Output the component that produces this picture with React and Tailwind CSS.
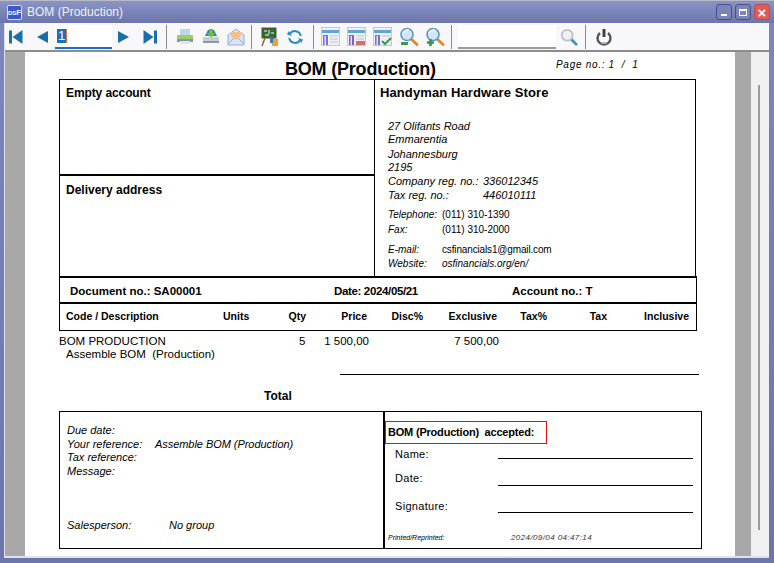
import React from "react";

const Sep = ({ ml = 0, mr = 0 }) => <div className="w-px h-[24px] bg-[#8a8a8a] shrink-0" style={{ marginLeft: ml, marginRight: mr }} />;

const Nav = ({ d, cx }) => (
  <svg width="16" height="16" viewBox="0 0 16 16" className="shrink-0" style={{ marginLeft: cx }}>
    <path d={d} fill="#1b6fa8" />
  </svg>
);

const Report = ({ color1 = "#7f6fd0", extra }) => (
  <svg width="20" height="20" viewBox="0 0 20 20" className="shrink-0">
    <rect x="0.5" y="0.5" width="18" height="18" fill="#eef0f4" stroke="#c4c8d0" />
    <rect x="1" y="3" width="17" height="3" fill="#5ea6d6" />
    <rect x="2" y="8" width="5" height="10" fill={color1} />
    <rect x="3.5" y="9" width="1.5" height="9" fill="#e9e4fa" />
    {extra}
  </svg>
);

const Magnifier = ({ sign }) => (
  <svg width="20" height="20" viewBox="0 0 20 20" className="shrink-0">
    <path d="M11.5 11.5l6.5 6" stroke="#e08a2e" strokeWidth="3" strokeLinecap="round" />
    <circle cx="8" cy="7.5" r="6" fill="#cfe6f7" stroke="#5b96c4" strokeWidth="1.6" />
    <path d="M4 6c1-2 3-3 6-3" stroke="#fff" strokeWidth="1.5" fill="none" />
    {sign === "minus" && <rect x="2" y="15" width="7" height="3" fill="#3c9a4e" />}
    {sign === "plus" && <path d="M5.5 12v7M2 15.5h7" stroke="#2f9a46" strokeWidth="2.6" />}
  </svg>
);

const Toolbar = () => (
  <div className="h-[27px] shrink-0 bg-[#f8f8fb] flex items-center border-b-2 border-[#8c8c8c] box-content">
    <Nav cx={3} d="M1 1.5h3v13H1zM14.5 1v14L4.5 8z" />
    <Nav cx={11} d="M13 2v12L2 8z" />
    <div className="ml-[4px] w-[57px] h-[24px] bg-white border-b-2 border-[#1a6fc4] shrink-0 flex items-center pl-[2px]">
      <span className="bg-[#1a6fc4] text-white text-[13px] leading-[14px] h-[14px] px-[1px]">1</span>
      <span className="w-px h-[14px] bg-[#d9782a]" />
    </div>
    <Nav cx={3} d="M3 2v12l11-6z" />
    <Nav cx={11} d="M1.500 1v14L11.500 8zM12 1.500h3v13h-3z" />
    <Sep ml={8} mr={9} />
    <svg width="18" height="18" viewBox="0 0 18 18" className="shrink-0">
      <rect x="4" y="1" width="10" height="6" fill="#bcd6ea" />
      <rect x="1" y="7" width="16" height="6" rx="1" fill="#9ccf5f" />
      <rect x="1" y="11" width="16" height="3" fill="#7d9aa8" />
      <rect x="4" y="13" width="10" height="3" fill="#dfe5ea" />
    </svg>
    <svg width="20" height="18" viewBox="0 0 20 18" className="shrink-0 ml-[7px]">
      <path d="M4 8L7 2h6l3 6z" fill="#2d7ea8" />
      <path d="M8 1h4v4h2.500L10 9.500 5.500 5H8z" fill="#6bbf3a" />
      <path d="M2 9h16v6H2z" fill="#c4ced4" />
      <path d="M2 13h16v2H2z" fill="#8b9aa2" />
    </svg>
    <svg width="18" height="18" viewBox="0 0 18 18" className="shrink-0 ml-[6px]">
      <path d="M1 7l8-6 8 6v10H1z" fill="#dbe3f5" stroke="#9aaad6" />
      <path d="M4 8V4h10v4l-5 4z" fill="#f2c188" />
      <path d="M1 16l6-6M17 16l-6-6" stroke="#9aaad6" />
    </svg>
    <Sep ml={6} mr={9} />
    <svg width="18" height="20" viewBox="0 0 18 20" className="shrink-0">
      <rect x="1" y="1" width="14" height="10" fill="#2c6b33" stroke="#6b4a26" />
      <path d="M3 4h3M8 3v4M10 6h3M4 8h4" stroke="#fff" />
      <path d="M4 11l-3 8M12 11l2 8" stroke="#8c5b2a" strokeWidth="1.400" />
      <rect x="11" y="12" width="6" height="7" fill="#e9a52d" />
      <rect x="9" y="10" width="3" height="6" fill="#4a74b8" />
    </svg>
    <svg width="16" height="16" viewBox="0 0 16 16" className="shrink-0 ml-[8px]" fill="none">
      <path d="M2.200 9A6 6 0 0 0 13.500 10.500" stroke="#2a8cc0" strokeWidth="2" />
      <path d="M13.800 7A6 6 0 0 0 2.500 5.500" stroke="#2a8cc0" strokeWidth="2" />
      <path d="M0 5.500L5 7 1.500 2zM16 10.500L11 9l3.500 5z" fill="#2a8cc0" />
    </svg>
    <Sep ml={10} mr={7} />
    <Report extra={<path d="M9 9h8M9 12h8M9 15h8" stroke="#cfd3da" strokeWidth="1.600" />} />
    <div className="w-[6px] shrink-0" />
    <Report color1="#7f5fc8" extra={<><path d="M9 9h8M9 12h8" stroke="#cfd3da" strokeWidth="1.600" /><rect x="9" y="14" width="9" height="4" fill="#dd6a6a" /></>} />
    <div className="w-[6px] shrink-0" />
    <Report extra={<><path d="M9 9h8" stroke="#cfd3da" strokeWidth="1.600" /><path d="M9 14l3 3 6-6" stroke="#3c9a4e" strokeWidth="2" fill="none" /></>} />
    <div className="w-[6px] shrink-0" />
    <Magnifier sign="minus" />
    <div className="w-[6px] shrink-0" />
    <Magnifier sign="plus" />
    <Sep ml={6} mr={6} />
    <div className="w-[98px] h-[24px] bg-white border-b-2 border-[#9a9a9a] shrink-0" />
    <svg width="18" height="18" viewBox="0 0 20 20" className="shrink-0 ml-[4px]">
      <path d="M12 12l6 6" stroke="#3f8fc4" strokeWidth="3" strokeLinecap="round" />
      <circle cx="8" cy="8" r="6" fill="#eef2f4" stroke="#b9c2c8" strokeWidth="2" />
    </svg>
    <Sep ml={7} mr={10} />
    <svg width="16" height="18" viewBox="0 0 16 18" fill="none" className="shrink-0">
      <path d="M4 5a6.500 6.500 0 1 0 8 0" stroke="#555" strokeWidth="2.400" />
      <rect x="6.500" y="1" width="3" height="8" fill="#444" />
      <path d="M5 15h6" stroke="#aaa" strokeWidth="1.500" />
    </svg>
  </div>
);

export default function App() {
  return (
    <div className="w-[774px] h-[563px] overflow-hidden flex flex-col bg-gradient-to-b from-[#7d87bb] to-[#6a75aa] font-['Liberation_Sans',Arial,sans-serif] text-black">
      <div className="h-[23px] shrink-0 flex items-center pl-[7px] pr-[4px] border-t border-[#b8bac8] bg-gradient-to-b from-[#8a94c4] to-[#6c76ac]">
        <div className="w-[15px] h-[15px] bg-[#3c58c8] rounded-[2px] text-white text-[8px] font-bold leading-[14px] text-center border border-[#d8def4] shrink-0 overflow-hidden whitespace-nowrap">
          <span className="text-[6px]">DS</span>F
        </div>
        <span className="ml-[5px] text-[12px] text-[#eef0fa]">BOM (Production)</span>
        <div className="ml-auto flex gap-[3px] items-center">
          <div className="w-[16px] h-[16px] rounded-[3px] border border-[#47508a] bg-[#7b85bb] flex items-end justify-center pb-[3px]"><div className="w-[6px] h-[2px] bg-white" /></div>
          <div className="w-[16px] h-[16px] rounded-[3px] border border-[#47508a] bg-[#7b85bb] flex items-center justify-center"><div className="w-[8px] h-[7px] border border-white border-t-2" /></div>
          <div className="w-[16px] h-[16px] rounded-[3px] border border-[#c04a4a] bg-[#e05a58] flex items-center justify-center text-white font-bold text-[15px] leading-none">×</div>
        </div>
      </div>
      <div className="flex flex-col flex-1 min-h-0 ml-[4px] mr-[5px] mb-[5px] border-l border-b-2 border-[#dfe0ea]">
        <Toolbar />
        <div className="flex flex-1 min-h-0">
          <div className="w-[20px] bg-[#a8a8a8] shrink-0" />
          <div className="w-[710px] bg-white shrink-0 pl-[34px] overflow-hidden">
            <div className="relative h-[27px]">
              <h1 className="absolute left-[226px] top-[7px] text-[18px] leading-[21px] font-bold whitespace-nowrap tracking-[-0.2px]">BOM (Production)</h1>
              <div className="absolute left-[497px] top-[7px] text-[10px] leading-[12px] italic whitespace-nowrap tracking-[0.7px]">Page no.: 1&nbsp; /&nbsp; 1</div>
            </div>
            {/* top box */}
            <div className="w-[637px] h-[198px] border border-black flex">
              <div className="w-[315px] border-r border-black flex flex-col shrink-0">
                <div className="h-[96px] border-b-2 border-black pl-[6px] pt-[5px] text-[12px] font-bold leading-[16px] tracking-[-0.1px]">Empty account</div>
                <div className="pl-[6px] pt-[6px] text-[12px] font-bold leading-[16px]">Delivery address</div>
              </div>
              <div className="flex-1 pl-[5px] pt-[5px]">
                <div className="text-[13px] font-bold leading-[16px] tracking-[0.1px]">Handyman Hardware Store</div>
                <div className="pl-[8px] pt-[19px] text-[11px] italic leading-[14px]">
                  <div className="leading-[12px]">27 Olifants Road</div>
                  <div className="leading-[15px]">Emmarentia</div>
                  <div className="leading-[14px]">Johannesburg</div>
                  <div className="leading-[13px]">2195</div>
                  <div className="flex"><span className="w-[95px]">Company reg. no.:</span><span>336012345</span></div>
                  <div className="flex"><span className="w-[95px]">Tax reg. no.:</span><span>446010111</span></div>
                  <div className="flex text-[10px] mt-[5px] leading-[15px]"><span className="w-[54px]">Telephone:</span><span className="not-italic">(011) 310-1390</span></div>
                  <div className="flex text-[10px] leading-[15px]"><span className="w-[54px]">Fax:</span><span className="not-italic">(011) 310-2000</span></div>
                  <div className="flex text-[10px] mt-[6px] leading-[14px]"><span className="w-[54px]">E-mail:</span><span className="not-italic tracking-[-0.15px]">csfinancials1@gmail.com</span></div>
                  <div className="flex text-[10px] leading-[14px]"><span className="w-[54px]">Website:</span><span>osfinancials.org/en/</span></div>
                </div>
              </div>
            </div>
            {/* document line */}
            <div className="w-[638px] h-[28px] pt-[3px] border border-black border-t-2 border-b-2 -mt-[1px] flex items-center text-[11.500px] font-bold whitespace-nowrap">
              <span className="ml-[10px] w-[264px]">Document no.: SA00001</span>
              <span className="w-[178px] text-[11.500px] tracking-[-0.35px]">Date: 2024/05/21</span>
              <span>Account no.: T</span>
            </div>
            {/* header */}
            <div className="w-[638px] h-[28px] border border-black border-t-0 -mt-[1px] flex items-center text-[10.500px] font-bold whitespace-nowrap">
              <span className="ml-[6px] w-[157px]">Code / Description</span>
              <span className="w-[50px]">Units</span>
              <span className="w-[33px] text-right">Qty</span>
              <span className="w-[61px] text-right">Price</span>
              <span className="w-[56px] text-right">Disc%</span>
              <span className="w-[74px] text-right">Exclusive</span>
              <span className="w-[50px] text-right">Tax%</span>
              <span className="w-[60px] text-right">Tax</span>
              <span className="w-[82px] text-right">Inclusive</span>
            </div>
            {/* row */}
            <div className="w-[640px] mt-[4px] text-[11.500px] leading-[13px]">
              <div className="flex">
                <span className="w-[240px]">BOM PRODUCTION</span>
                <span className="w-[7px]">5</span>
                <span className="w-[63px] text-right">1 500,00</span>
                <span className="w-[130px] text-right">7 500,00</span>
              </div>
              <div className="pl-[7px]">Assemble BOM&nbsp; (Production)</div>
            </div>
            <div className="ml-[281px] w-[359px] h-px bg-black mt-[13px]" />
            <div className="ml-[205px] mt-[14px] text-[12px] font-bold leading-[14px]">Total</div>
            {/* bottom box */}
            <div className="w-[643px] h-[138px] mt-[8px] border border-black flex">
              <div className="w-[325px] shrink-0 border-r-2 border-black pl-[7px] pt-[12px] text-[11px] italic leading-[13.500px] flex flex-col">
                <div>Due date:</div>
                <div className="flex"><span className="w-[88px]">Your reference:</span><span className="tracking-[-0.05px]">Assemble BOM (Production)</span></div>
                <div>Tax reference:</div>
                <div>Message:</div>
                <div className="flex mt-[41px]"><span className="w-[102px]">Salesperson:</span><span>No group</span></div>
              </div>
              <div className="flex-1">
                <div className="mt-[9px] w-[162px] h-[23px] border border-[#e01010] flex items-center pl-[2px] text-[11px] font-bold whitespace-nowrap tracking-[-0.2px]">BOM (Production)&nbsp; accepted:</div>
                <div className="pl-[10px] text-[11px] tracking-[0.3px] leading-[14px] -mt-[6px]">
                  <div className="flex items-end h-[22px]"><span className="w-[103px] -mb-[1px]">Name:</span><span className="w-[195px] h-px bg-black mb-[1px]" /></div>
                  <div className="flex items-end h-[27px]"><span className="w-[103px] mb-[2px]">Date:</span><span className="w-[195px] h-px bg-black mb-[1px]" /></div>
                  <div className="flex items-end h-[27px]"><span className="w-[103px] mb-[1px]">Signature:</span><span className="w-[195px] h-px bg-black mb-[1px]" /></div>
                </div>
                <div className="flex items-center mt-[19px] pl-[3px] text-[7px] italic leading-[9px]">
                  <span className="w-[123px]">Printed/Reprinted:</span>
                  <span className="text-[8px] tracking-[0.4px] text-[#333]">2024/09/04 04:47:14</span>
                </div>
              </div>
            </div>
          </div>
          <div className="w-[16px] bg-[#a8a8a8] shrink-0" />
          <div className="flex-1 bg-[#f0f0f0] relative">
            <div className="absolute left-[7px] top-[33px] w-[2px] h-[445px] bg-[#9a9a9a]" />
          </div>
        </div>
      </div>
    </div>
  );
}
